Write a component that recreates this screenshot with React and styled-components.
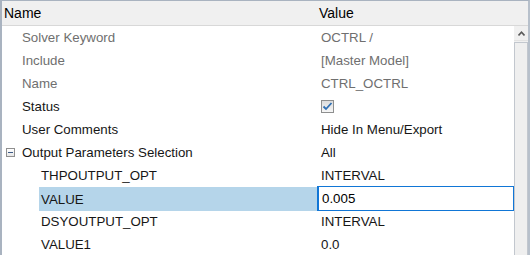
import React from 'react'
import styled, { createGlobalStyle } from 'styled-components'

const GlobalStyle = createGlobalStyle`
  html, body {
    margin: 0;
    padding: 0;
    background: #ffffff;
  }
  body {
    font-family: 'Liberation Sans', Arial, sans-serif;
    font-size: 13.3px;
  }
`

const Frame = styled.div`
  width: 530px;
  height: 255px;
  box-sizing: border-box;
  border-left: 2px solid #a9b3c0;
  border-top: 1px solid #a9b3c0;
  border-right: 2px solid #b7c0cb;
  overflow: hidden;
  display: flex;
  flex-direction: column;
  background: #ffffff;
`

const Header = styled.div`
  display: grid;
  grid-template-columns: 315px 1fr;
  height: 24px;
  background: #f0f0f0;
  border-bottom: 1px solid #d8d8d8;
  color: #000;
  font-size: 14px;
`

const HeaderCell = styled.div`
  display: flex;
  align-items: center;
  padding-left: ${(p) => p.$pad}px;
`

const Body = styled.div`
  flex: 1;
  display: flex;
  min-height: 0;
`

const List = styled.div`
  flex: 1;
  display: flex;
  flex-direction: column;
`

const Row = styled.div`
  display: grid;
  grid-template-columns: 315px 1fr;
  height: 23px;
  flex-shrink: 0;
`

const NameCell = styled.div`
  display: flex;
  align-items: center;
  margin-left: ${(p) => p.$indent}px;
  padding-left: 2px;
  background: ${(p) => (p.$selected ? '#b5d5ea' : 'transparent')};
  color: ${(p) => (p.$muted ? '#6f6f6f' : '#161616')};
  white-space: nowrap;
`

const ValueCell = styled.div`
  display: flex;
  align-items: center;
  padding-left: 4px;
  color: ${(p) => (p.$muted ? '#6f6f6f' : '#161616')};
  white-space: nowrap;
`

const EditBox = styled.div`
  display: flex;
  align-items: center;
  margin-top: -1px;
  height: 25px;
  box-sizing: border-box;
  border: 1px solid #1176d6;
  border-left-width: 2px;
  padding-left: 3px;
  color: #000;
  background: #fff;
`

const Toggle = styled.span`
  position: relative;
  width: 9px;
  height: 9px;
  box-sizing: border-box;
  border: 1px solid #8f8f8f;
  background: linear-gradient(#ffffff, #e6e6e6);
  margin-left: -16px;
  margin-right: 7px;
  &::after {
    content: '';
    position: absolute;
    left: 1px;
    right: 1px;
    top: 3px;
    height: 1px;
    background: #3c5a86;
  }
`

const Check = styled.span`
  display: inline-flex;
  width: 13px;
  height: 13px;
  box-sizing: border-box;
  border: 1px solid #8e8f8f;
  background: linear-gradient(#dcdcdc, #f6f6f6);
  align-items: center;
  justify-content: center;
`

const Scrollbar = styled.div`
  width: 14px;
  display: flex;
  flex-direction: column;
  background: #f0f0f0;
`

const ScrollButton = styled.div`
  height: 14px;
  display: flex;
  align-items: center;
  justify-content: center;
  background: #f0f0f0;
  border-bottom: 1px solid #e2e2e2;
`

const Thumb = styled.div`
  flex: 1;
  margin-top: 1px;
  border-left: 1px solid #c2c7ce;
  border-right: 1px solid #c2c7ce;
  border-top: 1px solid #c2c7ce;
  background: #efefef;
`

const rows = [
  { name: 'Solver Keyword', value: 'OCTRL /', level: 1, muted: true },
  { name: 'Include', value: '[Master Model]', level: 1, muted: true },
  { name: 'Name', value: 'CTRL_OCTRL', level: 1, muted: true },
  { name: 'Status', value: 'check', level: 1 },
  { name: 'User Comments', value: 'Hide In Menu/Export', level: 1 },
  { name: 'Output Parameters Selection', value: 'All', level: 1, toggle: true },
  { name: 'THPOUTPUT_OPT', value: 'INTERVAL', level: 2 },
  { name: 'VALUE', value: '0.005', level: 2, selected: true },
  { name: 'DSYOUTPUT_OPT', value: 'INTERVAL', level: 2 },
  { name: 'VALUE1', value: '0.0', level: 2 },
]

function CheckMark() {
  return (
    <Check>
      <svg width="11" height="11" viewBox="0 0 11 11">
        <path d="M1.5 5.5 L4 8 L9.5 2" fill="none" stroke="#2f6fb3" strokeWidth="1.8" />
      </svg>
    </Check>
  )
}

export default function App() {
  return (
    <>
      <GlobalStyle />
      <Frame>
        <Header>
          <HeaderCell $pad={2}>Name</HeaderCell>
          <HeaderCell $pad={2}>Value</HeaderCell>
        </Header>
        <Body>
          <List>
            {rows.map((r) => (
              <Row key={r.name}>
                <NameCell
                  $indent={r.level === 1 ? 18 : 37}
                  $muted={r.muted}
                  $selected={r.selected}
                >
                  {r.toggle && <Toggle />}
                  {r.name}
                </NameCell>
                {r.selected ? (
                  <EditBox>{r.value}</EditBox>
                ) : (
                  <ValueCell $muted={r.muted}>
                    {r.value === 'check' ? <CheckMark /> : r.value}
                  </ValueCell>
                )}
              </Row>
            ))}
          </List>
          <Scrollbar>
            <ScrollButton>
              <svg width="7" height="5" viewBox="0 0 7 5">
                <path d="M0.5 4.5 L3.5 1.2 L6.5 4.5" fill="none" stroke="#5a5a5a" strokeWidth="1.6" />
              </svg>
            </ScrollButton>
            <Thumb />
          </Scrollbar>
        </Body>
      </Frame>
    </>
  )
}
